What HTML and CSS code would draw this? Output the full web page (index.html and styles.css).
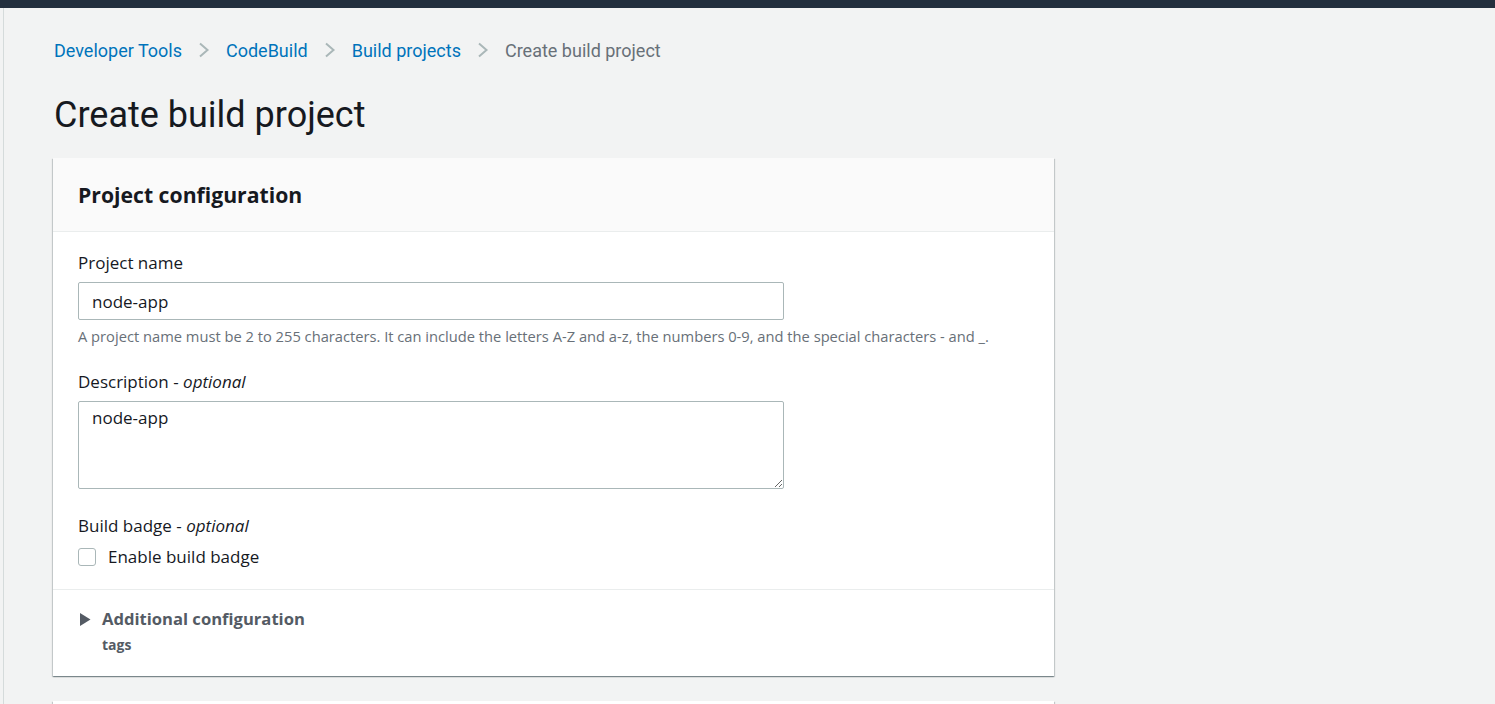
FILE: index.html
```html
<!DOCTYPE html>
<html lang="en">
<head>
<meta charset="utf-8">
<title>Create build project</title>
<link rel="stylesheet" href="styles.css">
</head>
<body>
<div class="topbar"></div>
<div class="shell">
  <div class="rail"></div>
  <main class="main">
    <nav class="breadcrumbs">
      <a class="crumb link" href="#">Developer Tools</a>
      <svg class="chev" viewBox="0 0 12 16" width="12" height="16"><path d="M2 1.5 L9.5 8 L2 14.5" fill="none" stroke="#aab7b8" stroke-width="2"/></svg>
      <a class="crumb link" href="#">CodeBuild</a>
      <svg class="chev" viewBox="0 0 12 16" width="12" height="16"><path d="M2 1.5 L9.5 8 L2 14.5" fill="none" stroke="#aab7b8" stroke-width="2"/></svg>
      <a class="crumb link" href="#">Build projects</a>
      <svg class="chev" viewBox="0 0 12 16" width="12" height="16"><path d="M2 1.5 L9.5 8 L2 14.5" fill="none" stroke="#aab7b8" stroke-width="2"/></svg>
      <span class="crumb current">Create build project</span>
    </nav>
    <h1 class="page-title">Create build project</h1>

    <section class="card">
      <header class="card-header">
        <h2 class="card-title">Project configuration</h2>
      </header>
      <div class="card-body">
        <div class="field">
          <label class="label" for="pname">Project name</label>
          <input class="input" id="pname" type="text" value="node-app">
          <div class="hint">A project name must be 2 to 255 characters. It can include the letters A-Z and a-z, the numbers 0-9, and the special characters - and _.</div>
        </div>
        <div class="field wide">
          <label class="label" for="pdesc">Description - <i>optional</i></label>
          <textarea class="textarea" id="pdesc">node-app</textarea>
        </div>
        <div class="field last">
          <div class="label">Build badge - <i>optional</i></div>
          <label class="check">
            <span class="box"></span>
            <span>Enable build badge</span>
          </label>
        </div>
      </div>
      <div class="card-footer">
        <div class="expander">
          <svg class="caret" viewBox="0 0 12 15" width="12" height="15"><path d="M1 1 L11.5 7.5 L1 14 Z" fill="#545b64"/></svg>
          <span class="exp-title">Additional configuration</span>
        </div>
        <div class="exp-sub">tags</div>
      </div>
    </section>

    <section class="card next"></section>
  </main>
</div>
</body>
</html>
```

FILE: styles.css
```css
* { box-sizing: border-box; }
html, body { margin: 0; padding: 0; }
body {
  background: #f2f3f3;
  font-family: "Open Sans", "Noto Sans", sans-serif;
  color: #16191f;
  overflow: hidden;
  height: 704px;
}
.topbar { height: 8px; background: #232f3e; }
.shell { display: flex; height: 696px; overflow: hidden; }
.rail { width: 3px; flex: none; }
.main {
  flex: 1;
  border-left: 1px solid #d5dbdb;
  padding: 29px 0 0 49px;
  overflow: hidden;
}
.breadcrumbs {
  display: flex;
  align-items: center;
  font-family: "Roboto", sans-serif;
  font-size: 18px;
  height: 26px;
  margin-left: 1px;
}
.crumb { text-decoration: none; white-space: nowrap; }
.link { color: #0073bb; }
.current { color: #687078; }
.chev { margin: 0 16px 0 16px; flex: none; }
.page-title {
  font-family: "Roboto", sans-serif;
  font-weight: 400;
  font-size: 36px;
  line-height: 44px;
  margin: 30px 0 0 1px;
  color: #16191f;
}
.card {
  width: 1001px;
  background: #fff;
  margin-top: 21px;
  box-shadow: 0 1px 1px 0 rgba(0,28,36,.3), 1px 1px 1px 0 rgba(0,28,36,.15), -1px 1px 1px 0 rgba(0,28,36,.15);
}
.card-header {
  background: #fafafa;
  border-bottom: 1px solid #eaeded;
  height: 74px;
  padding: 0 25px;
  display: flex;
  align-items: center;
}
.card-title {
  margin: 0;
  font-size: 21.2px;
  font-weight: 700;
  color: #16191f;
}
.card-body { padding: 19px 25px 20px; }
.field { margin-bottom: 24px; }
.field.wide { margin-bottom: 25px; }
.field.last { margin-bottom: 0; }
.label {
  display: block;
  font-size: 17px;
  line-height: 24px;
  color: #16191f;
  margin-bottom: 7px;
}
.label i { font-style: italic; }
.input, .textarea {
  display: block;
  width: 706px;
  border: 1px solid #aab7b8;
  border-radius: 2px;
  font-family: "Open Sans", "Noto Sans", sans-serif;
  font-size: 17px;
  color: #16191f;
  padding: 0 13px;
  background: #fff;
}
.input { height: 38px; }
.textarea {
  height: 88px;
  padding-top: 4px;
  resize: vertical;
  line-height: 24px;
}
.hint {
  font-size: 14.7px;
  line-height: 20px;
  color: #687078;
  margin-top: 6px;
  white-space: nowrap;
}
.check {
  display: flex;
  align-items: center;
  gap: 12px;
  font-size: 17px;
  line-height: 24px;
}
.box {
  width: 18px;
  height: 18px;
  border: 1px solid #aab7b8;
  border-radius: 3px;
  background: #fff;
  flex: none;
}
.card-footer {
  border-top: 1px solid #eaeded;
  padding: 17px 25px 22px;
}
.expander { display: flex; align-items: center; gap: 11px; }
.caret { margin-left: 1px; flex: none; }
.exp-title {
  font-size: 16.6px;
  font-weight: 700;
  color: #545b64;
  line-height: 24px;
}
.exp-sub {
  font-size: 14px;
  font-weight: 700;
  color: #545b64;
  margin-left: 24px;
  line-height: 18px;
  margin-top: 5px;
}
.card.next { height: 10px; margin-top: 25px; }
```
